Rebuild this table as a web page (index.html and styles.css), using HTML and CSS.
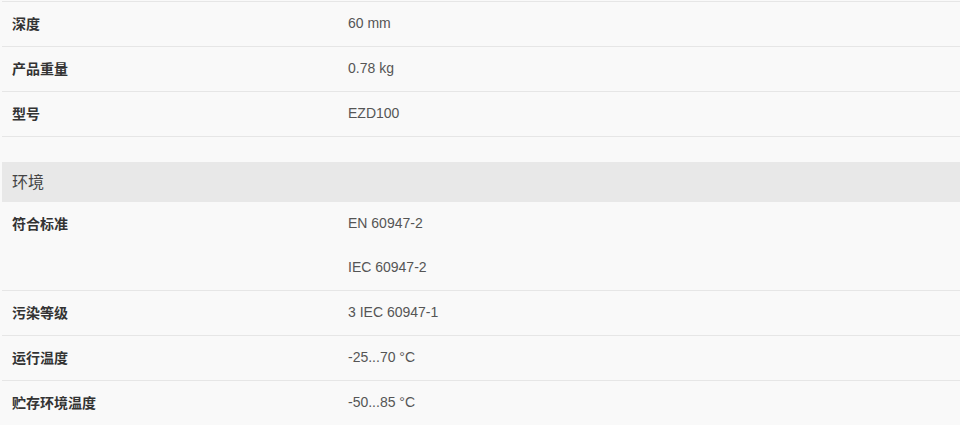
FILE: index.html
```html
<!DOCTYPE html>
<html lang="zh-CN">
<head>
<meta charset="utf-8">
<title>技术参数</title>
<link rel="stylesheet" href="styles.css">
</head>
<body>
<div class="specs">
  <div class="group">
    <div class="row"><div class="label">深度</div><div class="values"><div class="value">60 mm</div></div></div>
    <div class="row"><div class="label">产品重量</div><div class="values"><div class="value">0.78 kg</div></div></div>
    <div class="row last"><div class="label">型号</div><div class="values"><div class="value">EZD100</div></div></div>
  </div>
  <div class="group env">
    <div class="group-title">环境</div>
    <div class="row first"><div class="label">符合标准</div><div class="values"><div class="value">EN 60947-2</div><div class="value">IEC 60947-2</div></div></div>
    <div class="row"><div class="label">污染等级</div><div class="values"><div class="value">3 IEC 60947-1</div></div></div>
    <div class="row"><div class="label">运行温度</div><div class="values"><div class="value">-25...70 °C</div></div></div>
    <div class="row"><div class="label">贮存环境温度</div><div class="values"><div class="value">-50...85 °C</div></div></div>
  </div>
</div>
</body>
</html>
```
FILE: styles.css
```css
html, body {
  margin: 0;
  padding: 0;
  background: #f9f9f9;
}
body {
  font-family: "Liberation Sans", Arial, "Noto Sans CJK SC", sans-serif;
  font-size: 14px;
  color: #555;
}
.specs {
  padding: 1px 0 0 2px;
}
.row {
  display: grid;
  grid-template-columns: 336px 1fr;
  padding-left: 10px;
  border-top: 1px solid #e6e6e6;
}
.row.last {
  border-bottom: 1px solid #e6e6e6;
}
.row.first {
  border-top: none;
}
.label {
  font-family: "Noto Sans CJK SC", "Liberation Sans", sans-serif;
  font-weight: bold;
  color: #333;
  line-height: 42px;
  height: 42px;
  padding-bottom: 2px;
}
.value {
  line-height: 43px;
  height: 43px;
  padding-bottom: 1px;
}
.env {
  margin-top: 25px;
}
.group-title {
  background: #e8e8e8;
  height: 39px;
  line-height: 39px;
  padding-bottom: 1px;
  padding-left: 10px;
  font-family: "Noto Sans CJK SC", "Liberation Sans", sans-serif;
  font-size: 16px;
  color: #444;
}
```
